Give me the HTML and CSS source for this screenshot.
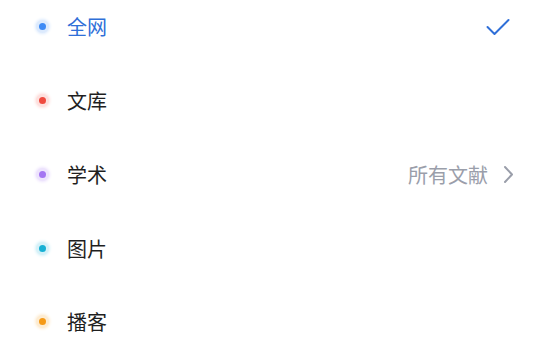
FILE: index.html
```html
<!DOCTYPE html>
<html lang="zh">
<head>
    <meta charset="UTF-8">
    <meta name="viewport" content="width=device-width, initial-scale=1.0">
    <title>搜索范围</title>
    <link rel="stylesheet" href="styles.css">
</head>
<body>
    <ul class="scope-list">
        <li class="scope-item active">
            <span class="dot dot-blue"></span>
            <span class="label">全网</span>
            <svg class="check" width="24" height="18" viewBox="0 0 24 18">
                <path d="M1.5 9 L8.5 16 L22.5 2" fill="none" stroke="#2f6fd8" stroke-width="2" stroke-linecap="round" stroke-linejoin="round"/>
            </svg>
        </li>
        <li class="scope-item">
            <span class="dot dot-red"></span>
            <span class="label">文库</span>
        </li>
        <li class="scope-item">
            <span class="dot dot-purple"></span>
            <span class="label">学术</span>
            <span class="extra">所有文献</span>
            <svg class="chevron" width="11" height="19" viewBox="0 0 11 19">
                <path d="M2 2 L9 9.5 L2 17" fill="none" stroke="#9a9eaa" stroke-width="2" stroke-linecap="round" stroke-linejoin="round"/>
            </svg>
        </li>
        <li class="scope-item">
            <span class="dot dot-cyan"></span>
            <span class="label">图片</span>
        </li>
        <li class="scope-item">
            <span class="dot dot-orange"></span>
            <span class="label">播客</span>
        </li>
    </ul>
</body>
</html>
```

FILE: styles.css
```css
* {
    margin: 0;
    padding: 0;
    box-sizing: border-box;
    font-family: "Noto Sans CJK SC", "Noto Sans", sans-serif;
}

body {
    background: #ffffff;
    overflow: hidden;
}

.scope-list {
    list-style: none;
    margin-top: -10px;
}

.scope-item {
    display: flex;
    align-items: center;
    height: 73.75px;
    padding: 0 39px 0 36px;
}

.dot {
    width: 13px;
    height: 13px;
    border-radius: 50%;
    display: flex;
    align-items: center;
    justify-content: center;
    flex-shrink: 0;
    box-shadow: 0 0 3px 1px var(--halo);
    background: var(--halo);
}

.dot::after {
    content: "";
    width: 7px;
    height: 7px;
    border-radius: 50%;
    background: currentColor;
}

.dot-blue { color: #3d8af5; --halo: #dceafd; }
.dot-red { color: #ef4a3f; --halo: #fde0de; }
.dot-purple { color: #a475f2; --halo: #ede3fd; }
.dot-cyan { color: #16b0d4; --halo: #d5f1f8; }
.dot-orange { color: #f59a17; --halo: #fdecd2; }

.label {
    margin-left: 18px;
    font-size: 20px;
    color: #1f1f1f;
    flex: 1;
}

.active .label {
    color: #2f6fd8;
}

.check {
    margin-right: 4px;
}

.extra {
    font-size: 20px;
    color: #9a9eaa;
    margin-right: 15px;
}
```
